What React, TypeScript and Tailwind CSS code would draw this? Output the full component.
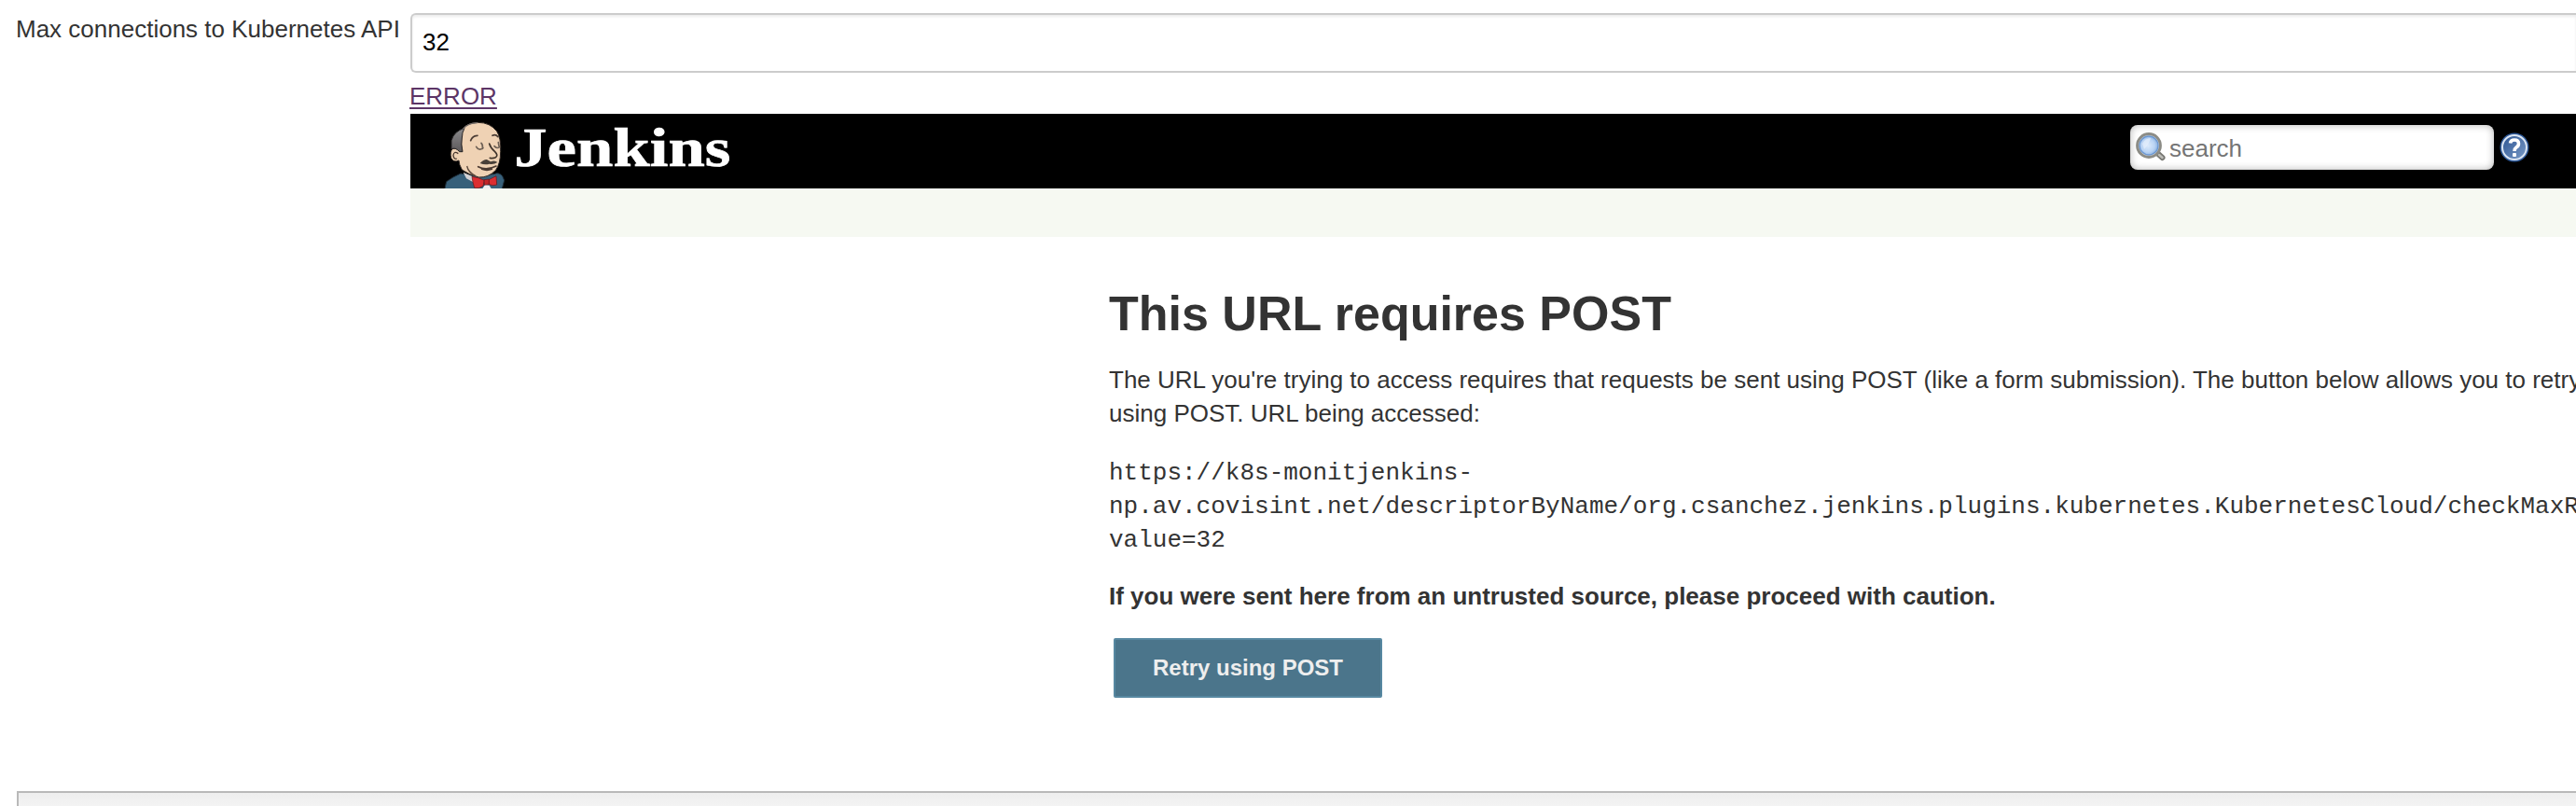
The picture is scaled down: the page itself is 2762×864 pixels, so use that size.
function ButlerLogo() {
  return (
    <svg className="block h-20 w-20 shrink-0" viewBox="0 6 240 240" aria-hidden="true">
      <defs>
        <filter id="soft" x="-10%" y="-10%" width="120%" height="120%">
          <feGaussianBlur stdDeviation="1.6" />
        </filter>
        <linearGradient id="hair" x1="0" y1="0" x2="0" y2="1">
          <stop offset="0" stopColor="#8a8a8c" />
          <stop offset="1" stopColor="#5c595b" />
        </linearGradient>
      </defs>
      <g filter="url(#soft)">
        <path d="M20 250 L26 224 Q48 208 72 198 L110 205 L180 200 Q194 192 206 206 L212 220 L204 250Z" fill="#38607a" stroke="#20303c" strokeWidth="3" />
        <path d="M80 194 L110 208 L112 226 L90 214Z" fill="#d4d2d4" />
        <path d="M140 250 L150 234 L164 236 L172 250Z" fill="#f0f0f2" />
        <path d="M70 70 Q80 36 128 34 Q166 34 188 62 Q202 84 200 128 Q200 166 184 188 Q160 212 130 210 Q98 202 76 186 Q66 168 66 156 Q48 164 41 148 Q36 128 46 118 Q64 112 76 126Z" fill="#efd2b4" stroke="#2e2622" strokeWidth="3" />
        <path d="M84 52 Q50 62 42 92 L42 120 Q54 112 68 128 L78 128 Q72 104 76 84 Q76 66 84 52Z" fill="url(#hair)" stroke="#252324" strokeWidth="3" />
        <path d="M78 56 Q94 36 126 35" fill="none" stroke="#77716d" strokeWidth="4" />
        <path d="M64 134 Q50 124 48 140 Q50 154 60 150" fill="none" stroke="#4b3b31" strokeWidth="4" />
        <path d="M104 92 Q110 76 126 76" fill="none" stroke="#4b3d35" strokeWidth="5" strokeLinecap="round" />
        <path d="M174 76 Q184 70 192 80" fill="none" stroke="#4b3d35" strokeWidth="5" strokeLinecap="round" />
        <path d="M122 112 Q130 126 144 116 M138 100 Q144 106 142 118" fill="none" stroke="#6e6055" strokeWidth="5" strokeLinecap="round" />
        <path d="M180 110 Q189 120 197 112 M193 98 L195 110" fill="none" stroke="#6e6055" strokeWidth="5" strokeLinecap="round" />
        <path d="M164 102 Q168 116 182 128 Q194 140 184 146 Q176 150 166 148" fill="none" stroke="#40342c" strokeWidth="5" strokeLinecap="round" />
        <path d="M134 165 Q146 152 156 153 L168 160 Q182 154 190 162 Q178 170 164 167 Q150 171 134 165Z" fill="#4a4039" />
        <path d="M128 176 Q154 190 186 174 M140 184 Q156 190 172 184" fill="none" stroke="#4c3a31" strokeWidth="5" strokeLinecap="round" />
        <path d="M92 174 Q96 194 120 206" fill="none" stroke="#5c4a3e" strokeWidth="4" />
        <path d="M108 208 Q128 210 148 220 L144 238 Q132 248 116 244 Q110 226 108 208Z" fill="#dc2f31" stroke="#5f1719" strokeWidth="2" />
        <path d="M186 206 L188 234 Q174 240 162 232 L162 218Z" fill="#dc2f31" stroke="#5f1719" strokeWidth="2" />
        <path d="M147 218 L163 216 L163 233 L148 235Z" fill="#c3272b" stroke="#5f1719" strokeWidth="2" />
      </g>
    </svg>
  );
}

function SearchIcon() {
  return (
    <svg className="h-8 w-8 shrink-0" viewBox="0 0 32 32" aria-hidden="true">
      <defs>
        <radialGradient id="glass" cx=".45" cy=".5" r=".6">
          <stop offset="0" stopColor="#dceafb" />
          <stop offset=".6" stopColor="#b9d3f3" />
          <stop offset="1" stopColor="#7ba5da" />
        </radialGradient>
      </defs>
      <path d="M23 22 L28.5 27" stroke="#777772" strokeWidth="6" strokeLinecap="round" />
      <path d="M25 24 L28.5 27" stroke="#bdbdb8" strokeWidth="2.5" strokeLinecap="round" />
      <circle cx="14" cy="14" r="12.4" fill="#d8d8d4" stroke="#8c8c86" strokeWidth="3" />
      <circle cx="14" cy="14" r="10" fill="url(#glass)" stroke="#6c98d2" strokeWidth="1.4" />
      <path d="M7 12 Q10 6 16 6 Q14 13 9 18Z" fill="#e6f0fc" opacity=".7" />
    </svg>
  );
}

function HelpIcon() {
  return (
    <svg className="h-8 w-8 shrink-0" viewBox="0 0 32 32" aria-hidden="true">
      <defs>
        <linearGradient id="help" x1="0" y1="0" x2="1" y2="1">
          <stop offset="0" stopColor="#2a5391" />
          <stop offset="1" stopColor="#7c9cc8" />
        </linearGradient>
      </defs>
      <circle cx="16" cy="16" r="15.5" fill="#2f5a9a" />
      <circle cx="16" cy="16" r="13" fill="url(#help)" stroke="#dbe5f2" strokeWidth="2" />
      <path d="M11.5 11.5 Q12 8 16 8 Q20.5 8 20.5 12 Q20.5 14.5 18 16 Q16 17.4 16 20" fill="none" stroke="#fff" strokeWidth="3.6" />
      <rect x="14" y="22" width="4" height="4" rx="1" fill="#fff" />
    </svg>
  );
}

export default function App() {
  return (
    <div className="flex h-[864px] w-full flex-col overflow-hidden bg-white pl-[18px] font-['Liberation_Sans',Arial,sans-serif] text-[26px] leading-9 text-[#333]">
      <div className="flex h-[848px] shrink-0 pt-[14px]">
        <label htmlFor="max" className="-mt-px -ml-px w-[423px] shrink-0 whitespace-nowrap">
          Max connections to Kubernetes API
        </label>
        <div className="flex min-w-0 grow flex-col">
          <input
            id="max"
            defaultValue="32"
            className="block h-16 w-full shrink-0 rounded-l-md border-2 border-r-0 border-[#ccc] bg-white px-[11px] pb-px text-[26px] text-black shadow-[inset_0_2px_3px_rgba(0,0,0,0.08)] outline-none"
          />
          <div className="h-11 shrink-0 pt-[7px]">
            <a href="#" className="-ml-px text-[#5c3566] underline decoration-2 underline-offset-[3px]">
              ERROR
            </a>
          </div>
          <header className="flex h-20 shrink-0 items-start bg-black pl-[30px]">
            <ButlerLogo />
            <span className="origin-left scale-x-[1.18] pl-px font-['Liberation_Serif',serif] text-[60px] font-bold leading-[72px] text-white [-webkit-text-stroke:0.7px_white]">
              Jenkins
            </span>
            <div className="mr-[50px] ml-auto flex items-center gap-1.5 pt-3">
              <div className="flex h-12 w-[390px] items-center gap-1 rounded-lg bg-white pl-1.5 text-[#757575] shadow-[inset_0_0_8px_rgba(0,0,0,0.3)]">
                <SearchIcon />
                <input
                  placeholder="search"
                  aria-label="search"
                  className="w-[330px] bg-transparent pt-0.5 text-[26px] outline-none placeholder:text-[#757575]"
                />
              </div>
              <HelpIcon />
            </div>
          </header>
          <div className="h-[52px] shrink-0 bg-[#f6f9f2]" />
          <main className="ml-[749px] whitespace-nowrap pt-[50px]">
            <h1 className="text-[52px] leading-[64px] font-bold">This URL requires POST</h1>
            <p className="pt-[21px]">
              The URL you're trying to access requires that requests be sent using POST (like a form submission). The button below allows you to retry
              <br />
              using POST. URL being accessed:
            </p>
            <p className="pt-7 font-['Liberation_Mono',monospace]">
              https://k8s-monitjenkins-
              <br />
              np.av.covisint.net/descriptorByName/org.csanchez.jenkins.plugins.kubernetes.KubernetesCloud/checkMaxR
              <br />
              value=32
            </p>
            <p className="pt-6 font-bold">If you were sent here from an untrusted source, please proceed with caution.</p>
            <button className="mt-[27px] ml-[5px] h-16 w-[288px] rounded-[2px] border-2 border-[#5788a1] bg-[#4b758b] text-2xl font-bold text-[#eee]">
              Retry using POST
            </button>
          </main>
        </div>
      </div>
      <div className="h-4 shrink-0 border-t-2 border-l-2 border-[#b9b9b9] bg-linear-to-b from-[#eee] to-[#f3f3f3]" />
    </div>
  );
}
